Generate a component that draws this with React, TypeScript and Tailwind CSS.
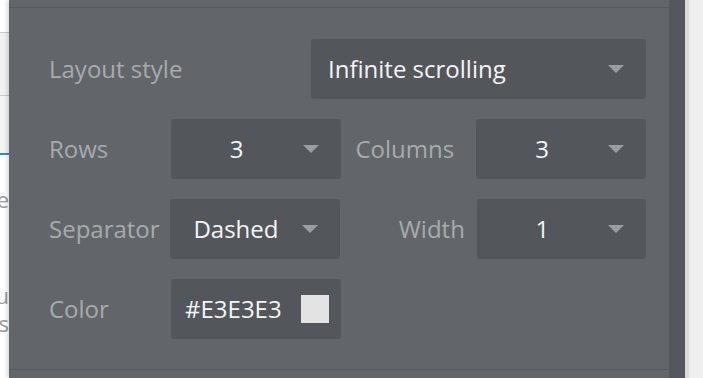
import React from 'react';

const Caret: React.FC = () => (
  <svg width="16" height="8" viewBox="0 0 16 8" className="shrink-0">
    <path d="M0 0 L16 0 L8 8 Z" fill="#9a9ea1" />
  </svg>
);

interface SelectProps {
  value: string;
  width: string;
  align?: 'left' | 'center';
}

const Select: React.FC<SelectProps> = ({ value, width, align = 'center' }) => (
  <div className={`${width} h-[60px] rounded-[3px] bg-[#53575b] flex items-center pr-[22px] text-[#f4f4f4]`}>
    {align === 'left' ? (
      <span className="flex-1 pl-[17px]">{value}</span>
    ) : (
      <span className="flex-1 text-center">{value}</span>
    )}
    <Caret />
  </div>
);

const App: React.FC = () => {
  return (
    <div
      className="w-[703px] h-[378px] flex overflow-hidden bg-[#efefef]"
      style={{ fontFamily: '"Open Sans", sans-serif' }}
    >
      {/* page behind the panel, cut off */}
      <div className="w-[9px] shrink-0 bg-white flex flex-col overflow-hidden text-[22px] text-[#9a9a9a]">
        <div className="h-[32px]" />
        <div className="h-[64px] border-y border-[#c9c9c9] bg-[#f1f1f1]" />
        <div className="h-[59px] bg-[#f3f3f3] border-b-2 border-[#2d8ae0]" />
        <div className="h-[30px]" />
        <div className="flex justify-end whitespace-nowrap leading-[28px]">Page</div>
        <div className="h-[68px]" />
        <div className="flex justify-end whitespace-nowrap leading-[28px]">Layou</div>
        <div className="flex justify-end whitespace-nowrap leading-[28px]">Groups</div>
      </div>

      {/* property panel */}
      <div className="w-[660px] shrink-0 bg-[#62666a] flex flex-col text-[24px] shadow-[-2px_0_4px_rgba(0,0,0,0.15)]">
        <div className="h-[8px] border-b border-[#575b5f]" />
        <div className="flex-1 pl-[40px] pr-[23px] pt-[31px] flex flex-col gap-[20px]">
          <div className="flex items-center justify-between">
            <span className="text-[#a7abae]">Layout style</span>
            <Select value="Infinite scrolling" width="w-[335px]" align="left" />
          </div>
          <div className="flex items-center">
            <span className="w-[122px] text-[#a7abae]">Rows</span>
            <Select value="3" width="w-[170px]" />
            <span className="w-[136px] pl-[15px] text-[#a7abae]">Columns</span>
            <Select value="3" width="w-[170px]" />
          </div>
          <div className="flex items-center">
            <span className="w-[122px] text-[#a7abae]">Separator</span>
            <Select value="Dashed" width="w-[170px]" />
            <span className="w-[126px] text-right text-[#a7abae]">Width</span>
            <span className="w-[12px]" />
            <Select value="1" width="w-[170px]" />
          </div>
          <div className="flex items-center">
            <span className="w-[122px] text-[#a7abae]">Color</span>
            <div className="w-[170px] h-[60px] rounded-[3px] bg-[#53575b] flex items-center pl-[14px] pr-[12px] text-[#f4f4f4]">
              <span className="flex-1">#E3E3E3</span>
              <span className="w-[28px] h-[28px] bg-[#e3e3e3]" />
            </div>
          </div>
        </div>
        <div className="h-[9px] border-t border-[#575b5f]" />
      </div>

      {/* scrollbar track */}
      <div className="w-[16px] shrink-0 bg-[#54585c]" />
      <div className="w-[4px] shrink-0 bg-[#dcdcdc]" />
    </div>
  );
};

export default App;
